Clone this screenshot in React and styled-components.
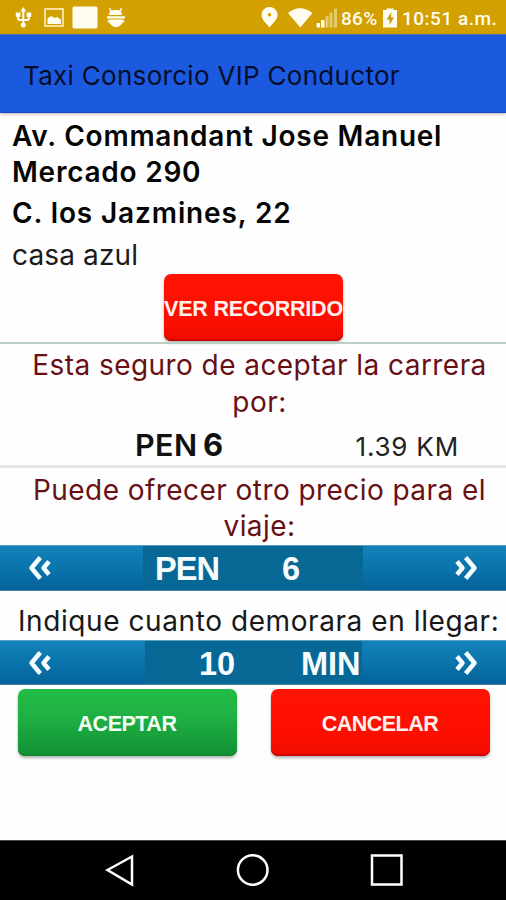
import React from "react";
import styled, { createGlobalStyle } from "styled-components";

const GlobalStyle = createGlobalStyle`
  * { box-sizing: border-box; }
  body { margin: 0; background: #fefefe; font-family: Inter, Roboto, sans-serif; overflow: hidden; }
`;

const Screen = styled.div`
  width: 506px;
  height: 900px;
  display: flex;
  flex-direction: column;
  background: #fefefe;
  color: #0c0c0c;
`;

const StatusBar = styled.header`
  height: 34px;
  flex: none;
  display: flex;
  justify-content: space-between;
  background: #d2a000;
  color: #fffdf0;
  svg { display: block; flex: none; }
`;

const StatusInfo = styled.div`
  display: flex;
  font: 500 19px/37px Roboto, sans-serif;
`;

const Percent = styled.span`
  width: 44px;
  padding-left: 2px;
  letter-spacing: 0.3px;
`;

const Clock = styled.span`
  width: 104px;
  letter-spacing: 0.5px;
  white-space: nowrap;
`;

const TitleBar = styled.h1`
  margin: 0;
  height: 79px;
  flex: none;
  padding-left: 23px;
  background: #1b5adf;
  border-top: 1px solid #5a72a4;
  border-bottom: 1px solid #1647c0;
  box-shadow: 0 1px 3px rgba(60, 30, 30, 0.35);
  color: #050d28;
  font-size: 26px;
  font-weight: 400;
  line-height: 82px;
  letter-spacing: 0.3px;
  white-space: nowrap;
  z-index: 1;
`;

const Address = styled.section`
  height: 229px;
  flex: none;
  display: flex;
  flex-direction: column;
  padding: 4.5px 12px 0;
`;

const Street = styled.p`
  margin: 0 0 4px;
  font-size: 28px;
  line-height: 36.5px;
  font-weight: 600;
  letter-spacing: ${p => p.$spacing}px;
  color: #050505;
`;

const Note = styled.p`
  margin: 2px 0 0;
  font-size: 28px;
  line-height: 36.5px;
  letter-spacing: 0.15px;
  color: #1a1a1a;
`;

const Button = styled.button`
  width: ${p => p.$width}px;
  height: 67px;
  flex: none;
  padding: 4px 0 0;
  border: 0;
  border-radius: 7px;
  background: ${p => p.$accept
    ? "linear-gradient(#22bd47, #1fb143 40%, #129035)"
    : "linear-gradient(#ff1403, #fe0e00 65%, #ee0b00)"};
  box-shadow: inset 0 -1.5px 0 ${p => (p.$accept ? "#0c862c" : "#c00500")},
    0 2px 3px rgba(0, 0, 0, 0.3);
  color: ${p => (p.$accept ? "#f4fff4" : "#fff1ee")};
  font: bold 21.5px "Liberation Sans", sans-serif;
  letter-spacing: ${p => p.$spacing}px;
  white-space: nowrap;
`;

const RouteButton = styled(Button)`
  align-self: center;
  margin-right: -1px;
`;

const Divider = styled.hr`
  margin: 0;
  border: 0;
  flex: none;
  height: ${p => p.$size}px;
  background: ${p => p.$color};
`;

const Offer = styled.section`
  flex: none;
  height: ${p => p.$height}px;
  padding: 3.5px 0 0 13px;
`;

const Question = styled.p`
  margin: 0;
  font-size: 28px;
  line-height: 36.5px;
  letter-spacing: 0.44px;
  text-align: center;
  color: #681014;
`;

const FareRow = styled.div`
  height: 45px;
  display: flex;
  padding-left: 122px;
  line-height: 49px;
`;

const Currency = styled.strong`
  width: 68px;
  font-size: 30.5px;
  font-weight: 600;
  letter-spacing: 0.4px;
  color: #111;
`;

const Fare = styled.strong`
  width: 152.5px;
  font-size: 31px;
  font-weight: 700;
  color: #111;
`;

const Distance = styled.span`
  font-size: 26px;
  line-height: 53px;
  letter-spacing: 0.8px;
  color: #222;
`;

const Stepper = styled.div`
  flex: none;
  height: ${p => p.$height}px;
  display: grid;
  grid-template-columns: ${p => p.$columns};
  grid-template-rows: 100%;
  background: linear-gradient(#1482bb, #0871a8 60%, #05639a);
  border-top: 1px solid #5aa0c0;
  border-bottom: 1px solid #46809c;
`;

const StepButton = styled.button`
  display: flex;
  align-items: flex-start;
  justify-content: ${p => (p.$next ? "flex-end" : "flex-start")};
  padding: ${p => (p.$next ? "8.5px 26px 0 0" : "8.5px 0 0 26px")};
  border: 0;
  background: none;
  color: #f7feff;
`;

const StepValues = styled.div`
  display: grid;
  grid-template-columns: ${p => p.$columns};
  padding-top: 4px;
  background: #076795;
  color: #f7fdff;
  font: bold 32.5px/39px "Liberation Sans", sans-serif;
`;

const StepValue = styled.span`
  letter-spacing: ${p => (p.$tight ? "-0.9px" : "0")};
`;

const ArrivalLabel = styled.p`
  flex: none;
  margin: 0;
  height: 49px;
  padding: 12px 0 0 18px;
  font-size: 28px;
  line-height: 36.5px;
  letter-spacing: 0.58px;
  color: #181818;
  white-space: nowrap;
`;

const Actions = styled.footer`
  flex: 1;
  display: flex;
  justify-content: space-between;
  padding: 4px 16.5px 0 17.5px;
`;

const NavBar = styled.nav`
  height: 60px;
  flex: none;
  background: #000;
  border-top: 1px solid #4a4a4a;
  svg { display: block; }
`;

const StatusIcons = () => (
  <svg width="140" height="34" fill="currentColor">
    <path d="M23.3 10v15M18 15v3q0 2 2 2h7q2 0 2-2v-3" fill="none" stroke="currentColor" strokeWidth="2" />
    <path d="M23.3 7l3 4.500h-6zM15.800 12.500h4.600V17h-4.600zM26.600 12.500h4.600V17h-4.600z" />
    <circle cx="23.300" cy="25" r="2.500" />
    <rect x="45" y="9" width="18" height="17" fill="none" stroke="#ffebb6" strokeWidth="1.700" />
    <path d="M47.500 24v-6l4-2 3 2 3-1 3.500 3v4z" />
    <rect x="72.500" y="6.500" width="25" height="22" rx="1.500" />
    <path d="M109 15c0-4.500 3-5 6.500-5s6.500.5 6.500 5zM107 16.300h18v2.200h-18zM108.500 19.500h15c0 4-3.500 7-7.500 7.800-4-.8-7.500-3.800-7.500-7.800z" />
    <path d="M109.500 8.300l2 3.500M121.500 8.300l-2 3.500M107.500 21.800l3-1M124.500 21.800l-3-1" stroke="currentColor" strokeWidth="1.600" />
  </svg>
);

const SignalIcons = () => (
  <svg width="80" height="34" fill="currentColor">
    <path fillRule="evenodd" d="M10.500 7a8 8 0 0 1 8 8c0 5-5 8-8 12.500-3-4.500-8-7.500-8-12.500a8 8 0 0 1 8-8zM10.500 13a1.700 1.700 0 1 0 .01 3.400a1.700 1.700 0 1 0-.01-3.400z" />
    <path d="M29 13q12-9.500 24.500 0L41.300 27.500z" />
    <path d="M57.500 23h3.500v4.500h-3.500zM62 20h3.500v7.500H62z" />
    <path d="M66.500 16h3v11.500h-3zM70.500 12.500h3v15h-3zM75 8.500h3v19h-3z" opacity=".45" />
  </svg>
);

const BatteryIcon = () => (
  <svg width="19" height="34">
    <path fill="currentColor" d="M0 10h3.500V8.500h7V10H14v17.500H0z" />
    <path fill="#c99a0b" d="M8.500 12L3.500 19.500h3V25l4.500-7.500H8z" />
  </svg>
);

const DoubleChevron = ({ flip }) => (
  <svg width="26" height="26" viewBox="0 0 26 26" fill="none" stroke="currentColor" strokeWidth="4.500">
    <g transform={flip ? "matrix(-1 0 0 1 26 0)" : undefined}>
      <path d="M14.300 2.500L5.500 13l8.800 10.500" strokeLinejoin="round" />
      <path d="M23 6.500L17.500 13l5.500 6.500" strokeLinejoin="round" />
    </g>
  </svg>
);

const Selector = ({ height, columns, valueColumns, values }) => (
  <Stepper $height={height} $columns={columns}>
    <StepButton aria-label="Anterior"><DoubleChevron /></StepButton>
    <StepValues $columns={valueColumns}>
      <span />
      {values.map(v => <StepValue key={v} $tight={v === "PEN"}>{v}</StepValue>)}
    </StepValues>
    <StepButton $next aria-label="Siguiente"><DoubleChevron flip /></StepButton>
  </Stepper>
);

export default function App() {
  return (
    <>
      <GlobalStyle />
      <Screen>
        <StatusBar>
          <StatusIcons />
          <StatusInfo>
            <SignalIcons />
            <Percent>86%</Percent>
            <BatteryIcon />
            <Clock>10:51 a.m.</Clock>
          </StatusInfo>
        </StatusBar>
        <TitleBar>Taxi Consorcio VIP Conductor</TitleBar>
        <Address>
          <Street $spacing={0.76}>Av. Commandant Jose Manuel Mercado 290</Street>
          <Street $spacing={0.88}>C. los Jazmines, 22</Street>
          <Note>casa azul</Note>
          <RouteButton $width={179} $spacing={-0.2}>VER RECORRIDO</RouteButton>
        </Address>
        <Divider $size={1.5} $color="#bccfc5" />
        <Offer $height={121.5}>
          <Question>Esta seguro de aceptar la carrera<br />por:</Question>
          <FareRow>
            <Currency>PEN</Currency>
            <Fare>6</Fare>
            <Distance>1.39 KM</Distance>
          </FareRow>
        </Offer>
        <Divider $size={3} $color="#e3e6e4" />
        <Offer $height={77}>
          <Question>Puede ofrecer otro precio para el<br />viaje:</Question>
        </Offer>
        <Selector height={46} columns="143px 220px 143px" valueColumns="12px 127px 1fr" values={["PEN", "6"]} />
        <ArrivalLabel>Indique cuanto demorara en llegar:</ArrivalLabel>
        <Selector height={45} columns="145px 217px 144px" valueColumns="54px 102px 1fr" values={["10", "MIN"]} />
        <Actions>
          <Button $accept $width={219} $spacing={-0.5}>ACEPTAR</Button>
          <Button $width={219} $spacing={-0.5}>CANCELAR</Button>
        </Actions>
        <NavBar>
          <svg width="506" height="59" fill="none" stroke="#fff" strokeWidth="2.500">
            <path d="M107.500 29L132 15.500v28z" />
            <circle cx="252.700" cy="29" r="14.800" />
            <rect x="372" y="14.500" width="29.500" height="29" />
          </svg>
        </NavBar>
      </Screen>
    </>
  );
}
